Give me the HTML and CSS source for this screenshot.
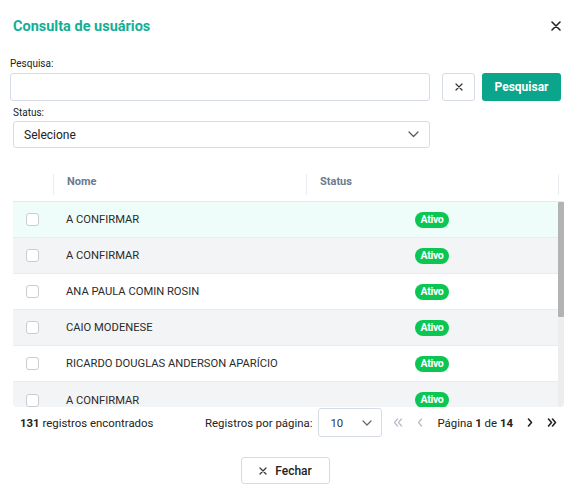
FILE: index.html
```html
<!DOCTYPE html>
<html lang="pt-BR">
<head>
<meta charset="utf-8">
<title>Consulta de usuários</title>
<link rel="stylesheet" href="styles.css">
</head>
<body>
<div class="modal">
  <div class="modal-head">
    <h1 class="title">Consulta de usuários</h1>
    <button class="close" aria-label="Fechar">
      <svg width="10" height="10" viewBox="0 0 10 10"><path d="M1 1L9 9M9 1L1 9" stroke="#222" stroke-width="1.6" stroke-linecap="round"/></svg>
    </button>
  </div>

  <div class="form">
    <label class="label">Pesquisa:</label>
    <div class="search-row">
      <input class="input" type="text">
      <button class="btn-clear" aria-label="Limpar">
        <svg width="8" height="8" viewBox="0 0 8 8"><path d="M1 1L7 7M7 1L1 7" stroke="#333" stroke-width="1.2" stroke-linecap="round"/></svg>
      </button>
      <button class="btn-primary">Pesquisar</button>
    </div>
    <div class="status-block">
      <label class="label">Status:</label>
      <div class="select">
        <span>Selecione</span>
        <svg width="11" height="7" viewBox="0 0 11 7"><path d="M1 1L5.5 5.5L10 1" stroke="#555" stroke-width="1.2" fill="none" stroke-linecap="round" stroke-linejoin="round"/></svg>
      </div>
    </div>
  </div>

  <div class="table">
    <div class="thead">
      <div class="th th-check"></div>
      <div class="th sep">Nome</div>
      <div class="th sep">Status</div>
      <div class="th sep"></div>
    </div>
    <div class="tbody">
      <div class="rows">
        <div class="tr active"><div class="td"><span class="cb"></span></div><div class="td name">A CONFIRMAR</div><div class="td st"><span class="badge">Ativo</span></div></div>
        <div class="tr"><div class="td"><span class="cb"></span></div><div class="td name">A CONFIRMAR</div><div class="td st"><span class="badge">Ativo</span></div></div>
        <div class="tr"><div class="td"><span class="cb"></span></div><div class="td name">ANA PAULA COMIN ROSIN</div><div class="td st"><span class="badge">Ativo</span></div></div>
        <div class="tr"><div class="td"><span class="cb"></span></div><div class="td name">CAIO MODENESE</div><div class="td st"><span class="badge">Ativo</span></div></div>
        <div class="tr"><div class="td"><span class="cb"></span></div><div class="td name">RICARDO DOUGLAS ANDERSON APARÍCIO</div><div class="td st"><span class="badge">Ativo</span></div></div>
        <div class="tr last"><div class="td"><span class="cb"></span></div><div class="td name">A CONFIRMAR</div><div class="td st"><span class="badge">Ativo</span></div></div>
      </div>
      <div class="scrollbar"><div class="thumb"></div></div>
    </div>
  </div>

  <div class="foot">
    <div class="count"><b>131</b> registros encontrados</div>
    <div class="pager">
      <span class="per-label">Registros por página:</span>
      <div class="select small">
        <span>10</span>
        <svg width="10" height="6" viewBox="0 0 10 6"><path d="M1 1L5 5L9 1" stroke="#666" stroke-width="1.2" fill="none" stroke-linecap="round" stroke-linejoin="round"/></svg>
      </div>
      <span class="pg-icon pg-first">
        <svg width="10" height="9" viewBox="0 0 10 9"><path d="M4.5 1L1.5 4.5L4.5 8M8.5 1L5.5 4.5L8.5 8" stroke="#b4bcc8" stroke-width="1.2" fill="none" stroke-linecap="round" stroke-linejoin="round"/></svg>
      </span>
      <span class="pg-icon pg-prev">
        <svg width="6" height="9" viewBox="0 0 6 9"><path d="M4.5 1L1.5 4.5L4.5 8" stroke="#b4bcc8" stroke-width="1.2" fill="none" stroke-linecap="round" stroke-linejoin="round"/></svg>
      </span>
      <span class="pg-text">Página <b>1</b> de <b>14</b></span>
      <span class="pg-icon pg-next">
        <svg width="6" height="9" viewBox="0 0 6 9"><path d="M1.5 1L4.5 4.5L1.5 8" stroke="#222" stroke-width="1.6" fill="none" stroke-linecap="round" stroke-linejoin="round"/></svg>
      </span>
      <span class="pg-icon pg-last">
        <svg width="10" height="9" viewBox="0 0 10 9"><path d="M1.5 1L4.5 4.5L1.5 8M5.5 1L8.5 4.5L5.5 8" stroke="#222" stroke-width="1.6" fill="none" stroke-linecap="round" stroke-linejoin="round"/></svg>
      </span>
    </div>
  </div>

  <div class="actions">
    <button class="btn-close">
      <svg width="8" height="8" viewBox="0 0 8 8"><path d="M1 1L7 7M7 1L1 7" stroke="#333" stroke-width="1.2" stroke-linecap="round"/></svg>
      <span>Fechar</span>
    </button>
  </div>
</div>
</body>
</html>
```

FILE: styles.css
```css
* { box-sizing: border-box; }

html, body {
  margin: 0;
  padding: 0;
  background: #ffffff;
}

body {
  font-family: Roboto, "Liberation Sans", Arial, sans-serif;
  color: #222;
  width: 578px;
  height: 500px;
  overflow: hidden;
}

.modal {
  width: 578px;
  height: 500px;
  background: #fff;
}

.modal-head {
  height: 52px;
  display: flex;
  align-items: center;
  justify-content: space-between;
  padding: 0 16px 0 13px;
}

.title {
  margin: 0;
  font-size: 14.5px;
  font-weight: 700;
  color: #14ae93;
}

.close {
  border: 0;
  background: none;
  padding: 0;
  width: 12px;
  height: 12px;
  display: flex;
  align-items: center;
  justify-content: center;
}

.form {
  margin-top: 6px;
  padding: 0 17px 0 10px;
}

.label {
  display: block;
  font-size: 10px;
  line-height: 12px;
  height: 12px;
  color: #222;
}

.search-row {
  display: flex;
  margin-top: 3px;
  height: 28px;
}

.input {
  flex: 1;
  height: 28px;
  border: 1px solid #d6dce5;
  border-radius: 3px;
  padding: 0 10px;
  font-family: inherit;
  font-size: 12px;
  outline: none;
}

.btn-clear {
  margin-left: 12px;
  width: 33px;
  height: 28px;
  border: 1px solid #d6dce5;
  border-radius: 3px;
  background: #fff;
  display: flex;
  align-items: center;
  justify-content: center;
  padding: 0;
}

.btn-primary {
  margin-left: 7px;
  width: 79px;
  height: 28px;
  border: 0;
  border-radius: 3px;
  background: #0aa58b;
  color: #fff;
  font-family: inherit;
  font-size: 12px;
  font-weight: 700;
  padding: 0;
}

.status-block {
  margin: 6px 131px 0 3px;
}

.select {
  margin-top: 2px;
  height: 27px;
  border: 1px solid #d6dce5;
  border-radius: 3px;
  display: flex;
  align-items: center;
  justify-content: space-between;
  padding: 0 10px 0 10px;
  font-size: 12px;
  color: #222;
}

.table {
  margin: 23px 14px 0 13px;
}

.thead {
  display: grid;
  grid-template-columns: 40px 253px 252px 6px;
  height: 31px;
  border-bottom: 1px solid #e6e9ee;
  padding-top: 3px;
}

.th {
  height: 21px;
  font-size: 11px;
  font-weight: 700;
  color: #6b7a8f;
  line-height: 14px;
  padding: 1px 0 0 13px;
}

.th-check { padding: 0; }

.sep { border-left: 1px solid #e9ecf0; }

.tbody {
  display: flex;
  height: 205px;
  border-radius: 0 0 4px 4px;
  overflow: hidden;
}

.rows {
  flex: 1;
  overflow: hidden;
}

.scrollbar {
  width: 6px;
  background: #ededed;
}

.thumb {
  height: 115px;
  background: #b3b3b3;
  border-radius: 1px;
}

.tr {
  display: grid;
  grid-template-columns: 40px 253px 252px;
  height: 36px;
  border-bottom: 1px solid #e8ebef;
  background: #fff;
}

.tr:nth-child(even) { background: #f3f4f6; }

.tr.active { background: #eefdf9; }

.tr.last { border-bottom: 0; }

.td {
  display: flex;
  align-items: center;
}

.td:first-child { padding-left: 13px; }

.cb {
  width: 13px;
  height: 13px;
  border: 1px solid #c9ccd1;
  border-radius: 3px;
  background: #fff;
}

.name {
  padding-left: 13px;
  font-size: 11.2px;
  color: #2b2b2b;
}

.st { justify-content: center; }

.badge {
  display: inline-block;
  width: 34px;
  height: 16px;
  line-height: 16px;
  border-radius: 8px;
  background: #0bc653;
  color: #fff;
  font-size: 10.5px;
  font-weight: 700;
  text-align: center;
  letter-spacing: -0.3px;
}

.foot {
  margin-top: 1px;
  height: 29px;
  display: flex;
  align-items: center;
  justify-content: space-between;
  padding: 0 21px 0 20px;
  font-size: 11.4px;
  color: #222;
}

.count b { font-weight: 700; }

.pager {
  display: flex;
  align-items: center;
}

.select.small {
  margin: 0 0 0 6px;
  width: 64px;
  height: 29px;
  padding: 0 9px 0 11px;
  font-size: 11.4px;
  color: #333;
}

.pg-icon {
  display: flex;
  align-items: center;
  justify-content: center;
}

.pg-first { margin-left: 11px; }
.pg-prev { margin-left: 14px; }
.pg-next { margin-left: 14px; }
.pg-last { margin-left: 14px; }

.pg-text {
  margin-left: 14px;
  color: #222;
}

.pg-text b { font-weight: 700; }

.actions {
  display: flex;
  justify-content: center;
  margin-top: 20px;
  padding-right: 7px;
}

.btn-close {
  width: 89px;
  height: 27px;
  border: 1px solid #d6dce5;
  border-radius: 3px;
  background: #fff;
  display: flex;
  align-items: center;
  justify-content: center;
  gap: 8px;
  font-family: inherit;
  font-size: 12px;
  font-weight: 500;
  color: #222;
  padding: 0;
}
```
